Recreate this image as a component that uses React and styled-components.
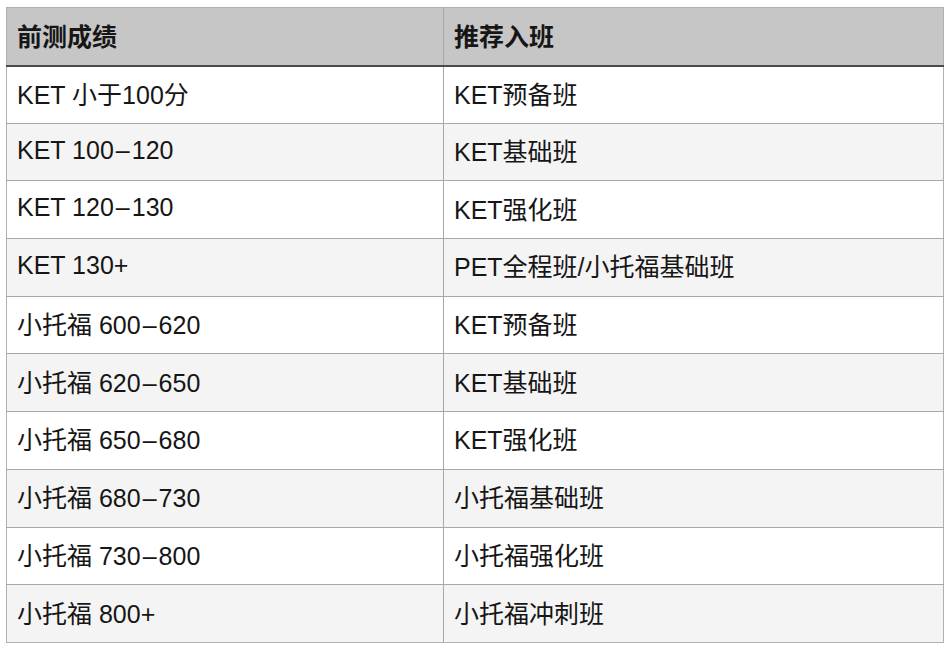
import React from "react";
import styled, { createGlobalStyle } from "styled-components";

const Global = createGlobalStyle`
  html, body { margin: 0; padding: 0; background: #ffffff; }
  body { font-family: "Liberation Sans", "Noto Sans CJK SC", sans-serif; }
`;

const Page = styled.div`
  width: 950px;
  height: 648px;
  padding: 7px 7px 0 6px;
  box-sizing: border-box;
  background: #fff;
`;

const Table = styled.table`
  width: 937px;
  border-collapse: collapse;
  table-layout: fixed;
  border: 1px solid #b0b0b0;
  font-family: "Liberation Sans", "Noto Sans CJK SC", sans-serif;
  color: #161616;
`;

const HeadCell = styled.th`
  height: 58px;
  padding: 0 0 3px 10px;
  text-align: left;
  font-size: 25px;
  font-weight: 700;
  background: #c6c6c6;
  border-bottom: 2px solid #4a4a4a;
  border-left: ${(p) => (p.$first ? "none" : "1px solid #a8a8a8")};
  box-sizing: border-box;
`;

const Row = styled.tr`
  background: ${(p) => (p.$alt ? "#f4f4f4" : "#ffffff")};
`;

const Cell = styled.td`
  height: 57.7px;
  padding: 0 0 4px 10px;
  font-size: 25px;
  font-weight: 400;
  border-top: 1px solid #a8a8a8;
  border-left: ${(p) => (p.$first ? "none" : "1px solid #a8a8a8")};
  box-sizing: border-box;
  white-space: nowrap;
`;

const Dash = styled.span`
  padding: 0 2px;
`;

const rows = [
  ["KET 小于100分", "KET预备班"],
  ["KET 100–120", "KET基础班"],
  ["KET 120–130", "KET强化班"],
  ["KET 130+", "PET全程班/小托福基础班"],
  ["小托福 600–620", "KET预备班"],
  ["小托福 620–650", "KET基础班"],
  ["小托福 650–680", "KET强化班"],
  ["小托福 680–730", "小托福基础班"],
  ["小托福 730–800", "小托福强化班"],
  ["小托福 800+", "小托福冲刺班"],
];

const withDash = (s) => {
  const parts = s.split("–");
  if (parts.length === 1) return s;
  return (
    <>
      {parts[0]}
      <Dash>–</Dash>
      {parts[1]}
    </>
  );
};

export default function App() {
  return (
    <>
      <Global />
      <Page>
        <Table>
          <colgroup>
            <col style={{ width: 437 }} />
            <col style={{ width: 500 }} />
          </colgroup>
          <thead>
            <tr>
              <HeadCell $first>前测成绩</HeadCell>
              <HeadCell>推荐入班</HeadCell>
            </tr>
          </thead>
          <tbody>
            {rows.map(([a, b], i) => (
              <Row key={i} $alt={i % 2 === 1}>
                <Cell $first>{withDash(a)}</Cell>
                <Cell>{b}</Cell>
              </Row>
            ))}
          </tbody>
        </Table>
      </Page>
    </>
  );
}
